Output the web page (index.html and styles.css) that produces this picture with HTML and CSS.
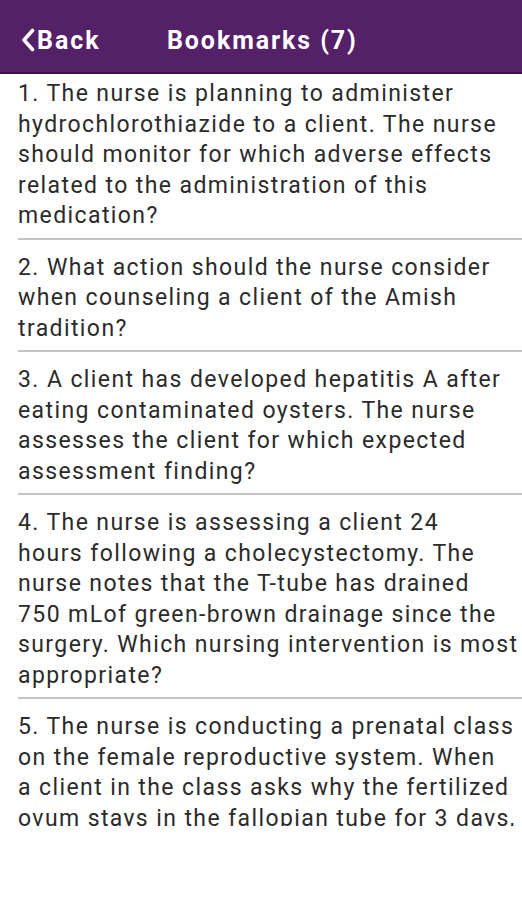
FILE: index.html
```html
<!DOCTYPE html>
<html>
<head>
<meta charset="utf-8">
<link rel="stylesheet" href="styles.css">
</head>
<body>

<div class="header">
	<a class="back" href="#">
		<svg class="chev" width="14" height="24" viewBox="0 0 14 24"><path d="M11.5 2.5 L3 12 L11.5 21.5" fill="none" stroke="#fff" stroke-width="3.6" stroke-linecap="round" stroke-linejoin="round"/></svg>
		<span>Back</span>
	</a>
	<span class="title">Bookmarks (7)</span>
</div>

<div class="list">
	<div class="item">1. The nurse is planning to administer hydrochlorothiazide to a client. The nurse should monitor for which adverse effects related to the administration of this medication?</div>
	<div class="item">2. What action should the nurse consider when counseling a client of the Amish tradition?</div>
	<div class="item">3. A client has developed hepatitis A after eating contaminated oysters. The nurse assesses the client for which expected assessment finding?</div>
	<div class="item lines">4. The nurse is assessing a client 24<br>hours following a cholecystectomy. The<br>nurse notes that the T-tube has drained<br>750 mLof green-brown drainage since the<br>surgery. Which nursing intervention is most<br>appropriate?</div>
	<div class="item lines">5. The nurse is conducting a prenatal class<br>on the female reproductive system. When<br>a client in the class asks why the fertilized<br>ovum stays in the fallopian tube for 3 days,<br>what explanation should the nurse provide?</div>
	<div class="item">6. A client is receiving treatment for a pulmonary embolism. Which finding requires immediate follow-up?</div>
	<div class="item">7. The nurse is reviewing medication orders for a client with heart failure.</div>
</div>

</body>
</html>
```

FILE: styles.css
```css
body {
	margin: 0;
	background: #fff;
	font-family: Roboto, "Liberation Sans", sans-serif;
}

.header {
	height: 74px;
	box-sizing: border-box;
	padding-top: 8px;
	background-color: #542068;
	border-bottom: 2px solid #3c1249;
	display: flex;
	align-items: center;
	color: #fff;
}
.back {
	display: flex;
	align-items: center;
	color: #fff;
	text-decoration: none;
	font-weight: bold;
	font-size: 25px;
	letter-spacing: 2px;
	margin-left: 21px;
	width: 146px;
}
.chev {
	margin-right: 2px;
}
.title {
	font-weight: bold;
	font-size: 25px;
	letter-spacing: 1.9px;
}

.list {
	height: 749px;
	padding-top: 3px;
	overflow: hidden;
	padding-left: 18px;
}
.item {
	font-size: 23px;
	line-height: 30.5px;
	letter-spacing: 1.4px;
	color: #2b2b2b;
	padding: 2px 3px 6px 0;
	border-bottom: 2px solid #c4c4c4;
	margin-bottom: 11px;
}
/* Zeilen sind fest umbrochen wie in der App */
.lines {
	white-space: nowrap;
	padding-right: 0;
}
```
